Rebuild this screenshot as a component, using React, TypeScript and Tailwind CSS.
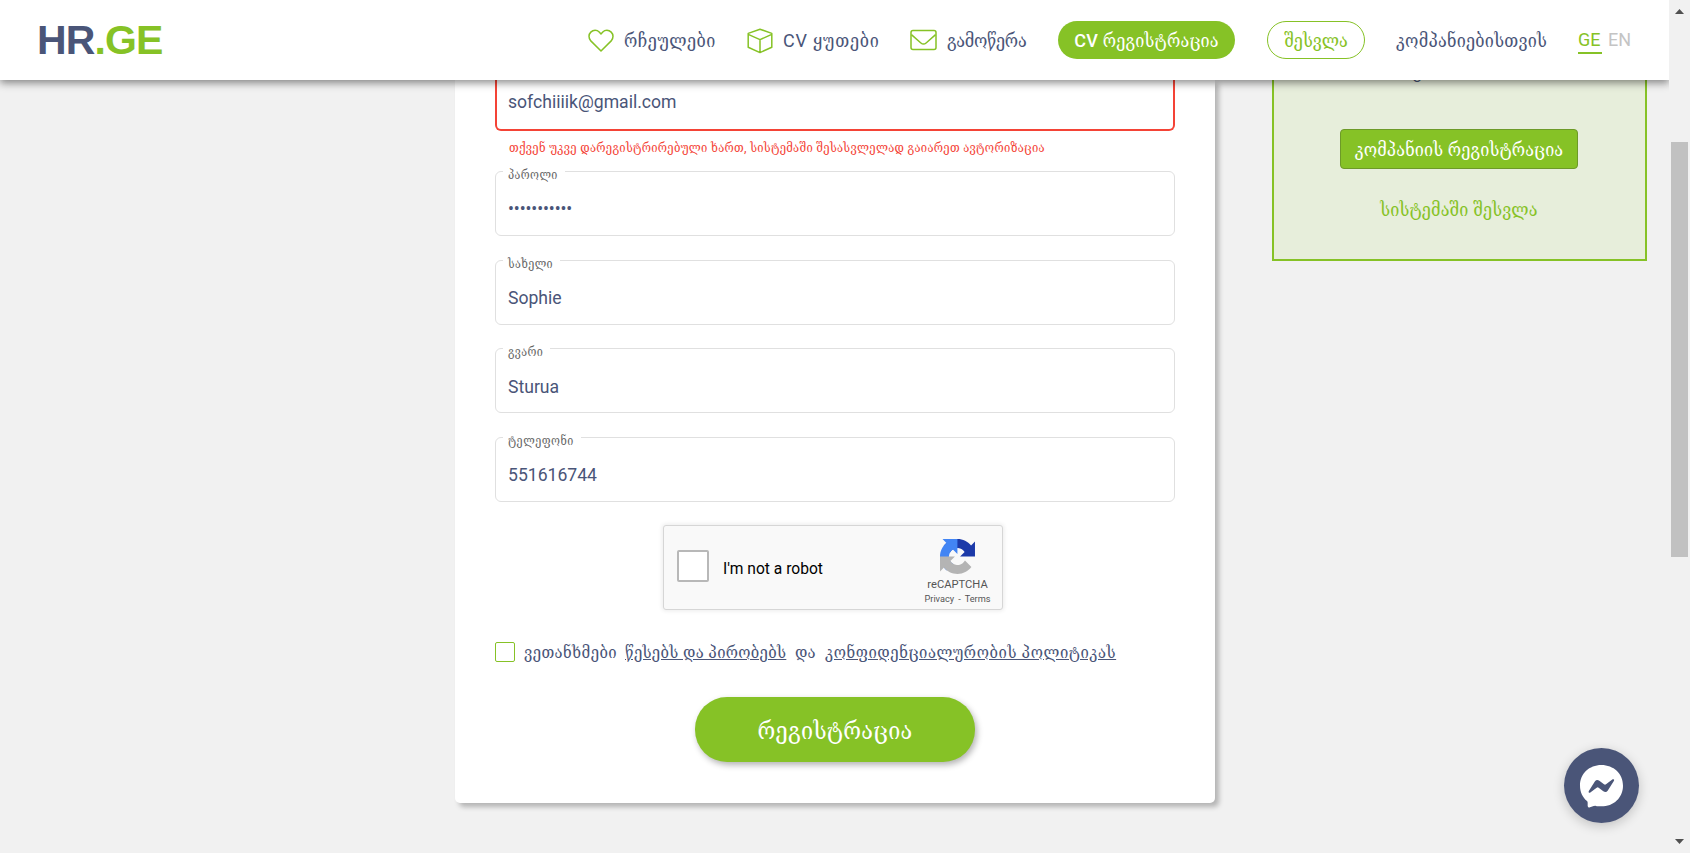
import type { ReactNode } from 'react';

const GEO = "font-['Roboto','DejaVu_Serif_Condensed','DejaVu_Serif',serif]";

function HeartIcon() {
  return (
    <svg width="26" height="24" viewBox="0 0 26 24" fill="none" stroke="#86c226" strokeWidth="1.5" strokeLinejoin="round">
      <path d="M13 22 L2.8 11.9 C0.3 9.2 0.5 5.3 2.8 3.1 C5.3 0.7 9 0.8 11.2 3 L13 4.9 L14.8 3 C17 0.8 20.7 0.7 23.2 3.1 C25.5 5.3 25.7 9.2 23.2 11.9 Z" />
    </svg>
  );
}

function CubeIcon() {
  return (
    <svg width="26" height="26" viewBox="0 0 26 26" fill="none" stroke="#86c226" strokeWidth="1.5" strokeLinejoin="round">
      <path d="M13 1.2 L24.8 5.4 V19.2 L13 24.6 L1.2 19.2 V5.4 Z M1.2 6.4 L13 11.6 L24.8 6.4 M13 11.6 V24.6" />
    </svg>
  );
}

function MailIcon() {
  return (
    <svg width="27" height="22" viewBox="0 0 27 22" fill="none" stroke="#86c226" strokeWidth="1.5" strokeLinejoin="round">
      <rect x="1" y="1.4" width="25" height="19" rx="2" />
      <path d="M1.4 5.6 L10.9 14 Q13.5 16.2 16.1 14 L25.6 5.6" />
    </svg>
  );
}

function RecaptchaIcon() {
  return (
    <svg width="35" height="35" viewBox="0 0 64 64">
      <path fill="#1c3aa9" d="M64 31.955l-.033-1.37V4.687l-7.16 7.16C50.948 4.674 42.033.093 32.05.093c-10.4 0-19.622 4.96-25.458 12.64l11.736 11.86a15.55 15.55 0 0 1 4.754-5.334c2.05-1.6 4.952-2.906 8.968-2.906.485 0 .86.057 1.135.163 4.976.393 9.288 3.14 11.828 7.124l-8.307 8.307L64 31.953" />
      <path fill="#4285f4" d="M31.862.094l-1.37.033H4.594l7.16 7.16C4.58 13.147 0 22.06 0 32.046c0 10.4 4.96 19.622 12.64 25.458L24.5 45.768a15.55 15.55 0 0 1-5.334-4.754c-1.6-2.05-2.906-4.952-2.906-8.968 0-.485.057-.86.163-1.135.393-4.976 3.14-9.288 7.124-11.828l8.307 8.307L31.86.095" />
      <path fill="#b4b4b4" d="M.001 32.045l.033 1.37v25.898l7.16-7.16c5.86 7.173 14.774 11.754 24.76 11.754 10.4 0 19.622-4.96 25.458-12.64l-11.736-11.86a15.55 15.55 0 0 1-4.754 5.334c-2.05 1.6-4.952 2.906-8.968 2.906-.485 0-.86-.057-1.135-.163-4.976-.393-9.288-3.14-11.828-7.124l8.307-8.307c-10.522.04-22.4.066-27.295-.005" />
    </svg>
  );
}

function Header() {
  return (
    <header className="relative z-10 flex h-20 w-[1669px] shrink-0 items-start bg-white text-[18px] leading-[24px] whitespace-nowrap text-[#4a5578] shadow-[0_3px_8px_rgba(0,0,0,0.45)]">
      <div className="ml-[37px] w-[551px] pt-[16px] font-['Liberation_Sans',sans-serif] text-[41px] leading-[48px] font-bold tracking-[-0.9px] text-[#4a5578]">
        HR<span className="text-[#86c226]">.GE</span>
      </div>
      <div className="flex w-[159px] pt-[29px]">
        <HeartIcon />
        <span className="ml-[10px] tracking-[0.5px]">რჩეულები</span>
      </div>
      <div className="flex w-[163px] pt-[28px]">
        <CubeIcon />
        <span className="mt-px ml-[10px] tracking-[0.8px]">CV ყუთები</span>
      </div>
      <div className="flex w-[148px] pt-[29px]">
        <MailIcon />
        <span className="ml-[10px] tracking-[-0.3px]">გამოწერა</span>
      </div>
      <div className="mt-[21px] flex h-[38px] w-[177px] items-center justify-center rounded-[19px] bg-[#86c226] pt-[2px] font-medium tracking-[0.2px] text-white">
        CV რეგისტრაცია
      </div>
      <div className="mt-[21px] ml-[32px] flex h-[38px] w-[98px] items-center justify-center rounded-[19px] border border-[#86c226] pt-[2px] font-medium text-[#86c226]">
        შესვლა
      </div>
      <div className="mt-[29px] ml-[31px] w-[182px] tracking-[0.25px]">კომპანიებისთვის</div>
      <div className="mt-[27px] flex gap-[6px] font-['Roboto',sans-serif] leading-[25px]">
        <span className="h-[27px] w-[24px] border-b-2 border-[#86c226] text-[#86c226]">GE</span>
        <span className="text-[#c4c4c4]">EN</span>
      </div>
    </header>
  );
}

function Field({ label, tracking, children }: { label: string; tracking: string; children: ReactNode }) {
  return (
    <div className="relative mb-[23.5px] flex h-[65px] items-center rounded-[6px] border border-[#e0e0e0] pt-[12px] pl-[12px] text-[17.6px] leading-[24px] text-[#4a5578]">
      <span className={`absolute -top-[5px] left-[7px] bg-white pr-[7px] pl-[5px] text-[12px] leading-[16px] text-[#666] ${tracking}`}>{label}</span>
      {children}
    </div>
  );
}

function Captcha() {
  return (
    <div className="ml-[168px] flex h-[85px] w-[340px] rounded-[3px] border border-[#d6d6d6] bg-[#f9f9f9] font-['Roboto',sans-serif] shadow-[0_0_4px_1px_rgba(0,0,0,0.08)]">
      <div className="mt-[24px] ml-[13px] size-[32px] rounded-[2px] border-2 border-[#b8b8b8] bg-white" />
      <div className="mt-[33px] ml-[14px] w-[202px] text-[15.6px] leading-[20px] text-black">I'm not a robot</div>
      <div className="flex w-[65px] flex-col items-center pt-[13px] whitespace-nowrap text-[#555]">
        <RecaptchaIcon />
        <div className="mt-[4px] text-[11.2px] leading-[14px]">reCAPTCHA</div>
        <div className="flex gap-[4px] text-[9.2px] leading-[13px]">
          <span>Privacy</span>
          <span>-</span>
          <span>Terms</span>
        </div>
      </div>
    </div>
  );
}

function RegistrationCard() {
  return (
    <main className="ml-[455px] h-[723px] w-[760px] rounded-b-[5px] bg-white px-[40px] shadow-[4px_4px_5px_rgba(0,0,0,0.25)]">
      <div className="flex h-[51px] items-center rounded-b-[6px] border-2 border-t-0 border-[#f44336] pb-[4px] pl-[11px] text-[17.6px] text-[#4a5578]">
        sofchiiiik@gmail.com
      </div>
      <div className="mb-[15px] pt-[8px] pl-[14px] text-[12.5px] leading-[17px] tracking-[0.28px] whitespace-nowrap text-[#f44336]">
        თქვენ უკვე დარეგისტრირებული ხართ, სისტემაში შესასვლელად გაიარეთ ავტორიზაცია
      </div>
      <Field label="პაროლი" tracking="tracking-[0.4px]">
        <span className="-mt-[2px] text-[17.6px] tracking-[-0.1px]">•••••••••••</span>
      </Field>
      <Field label="სახელი" tracking="tracking-[0.4px]">Sophie</Field>
      <Field label="გვარი" tracking="tracking-[0.4px]">Sturua</Field>
      <Field label="ტელეფონი" tracking="tracking-[0.5px]">551616744</Field>
      <Captcha />
      <div className="mt-[31px] flex h-[22px] text-[16.5px] leading-[24px] whitespace-nowrap text-[#4a5578]">
        <span className="mt-[1px] size-[20px] rounded-[2px] border border-[#86c226]" />
        <span className="ml-[9px] w-[101px] tracking-[0.4px]">ვეთანხმები</span>
        <a className="w-[170px] tracking-[0.3px]"><u>წესებს და პირობებს</u></a>
        <span className="w-[30px]">და</span>
        <a className="tracking-[0.57px] underline">კონფიდენციალურობის პოლიტიკას</a>
      </div>
      <button className="mt-[34px] ml-[200px] flex h-[65px] w-[280px] items-center justify-center rounded-[32px] bg-[#86c226] pt-[3px] text-[24px] tracking-[0.3px] text-white shadow-[2px_3px_6px_rgba(0,0,0,0.3)]">
        რეგისტრაცია
      </button>
    </main>
  );
}

function CompanyPanel() {
  return (
    <aside className="ml-[57px] flex h-[181px] w-[375px] flex-col items-center border-2 border-t-0 border-[#86c226] bg-[#e7eedb] pr-px text-[18px] leading-[24px] whitespace-nowrap">
      <div className="-mt-[20px] mr-[84px] h-[24px] text-[#4a5578]">გ</div>
      <button className="mt-[45px] flex h-[40px] w-[238px] items-center justify-center rounded-[4px] border border-[#6d9a28] bg-[#86c226] pt-[2px] tracking-[0.15px] text-white">
        კომპანიის რეგისტრაცია
      </button>
      <a className="mt-[29px] tracking-[0.15px] text-[#86c226]">სისტემაში შესვლა</a>
    </aside>
  );
}

function Scrollbar() {
  return (
    <div className="flex w-[21px] shrink-0 flex-col items-center bg-[#f1f1f1]">
      <svg className="mt-[9px]" width="9" height="5" viewBox="0 0 9 5"><path fill="#505050" d="M0 5 L4.5 0 L9 5 Z" /></svg>
      <div className="mt-[128px] h-[415px] w-[17px] bg-[#c1c1c1]" />
      <svg className="mt-auto mb-[9px]" width="9" height="5" viewBox="0 0 9 5"><path fill="#505050" d="M0 0 L4.5 5 L9 0 Z" /></svg>
    </div>
  );
}

function MessengerButton() {
  return (
    <div className="absolute top-[748px] left-[1564px] z-20 size-[75px] rounded-full bg-[#4a5578] shadow-[0_3px_12px_rgba(0,0,0,0.2)]">
      <svg width="75" height="75" viewBox="0 0 225 225">
        <path fill="#fff" d="M112 51 C76 51 48 77 48 113 C48 132 56 148 69 159 Q71 161 71 164 L71 174 Q72 180 78 178 L89 174 Q91 173 94 173 C100 175 106 175 112 175 C149 175 177 149 177 113 C177 77 149 51 112 51 Z" />
        <path fill="#4a5578" d="M74 130 L93 100 Q98 93 106 98 L120 109 Q123 111 126 109 L146 94 Q152 92 150 98 L131 128 Q126 135 118 130 L104 119 Q101 117 98 119 L78 134 Q73 136 74 130 Z" />
      </svg>
    </div>
  );
}

export default function App() {
  return (
    <div className={`relative flex h-[853px] w-[1690px] overflow-hidden bg-[#f1f1f1] ${GEO}`}>
      <div className="flex w-[1669px] flex-col overflow-hidden">
        <Header />
        <div className="flex items-start">
          <RegistrationCard />
          <CompanyPanel />
        </div>
      </div>
      <Scrollbar />
      <MessengerButton />
    </div>
  );
}
